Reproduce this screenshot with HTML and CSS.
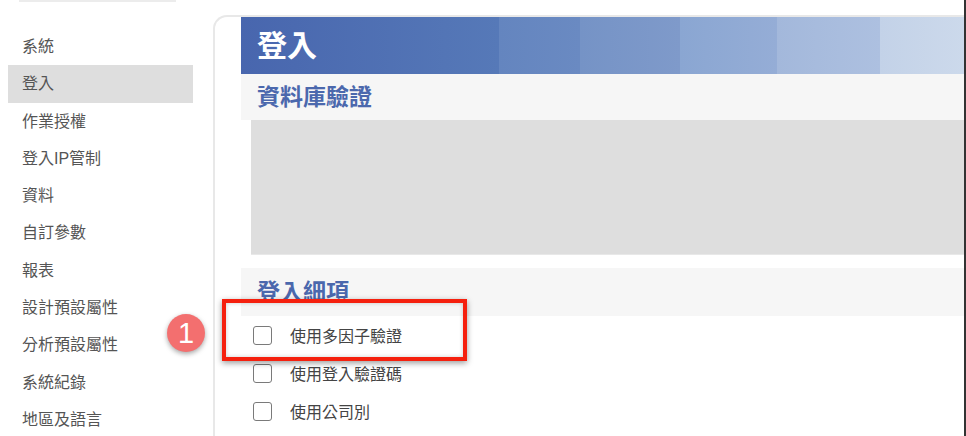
FILE: index.html
```html
<!DOCTYPE html>
<html lang="zh-Hant">
<head>
  <meta charset="UTF-8" />
  <meta name="viewport" content="width=device-width, initial-scale=1.0" />
  <title>登入設定</title>
  <link rel="stylesheet" href="styles.css">
</head>
<body>
  <div class="page">
    <aside class="sidebar">
      <div class="search-edge"></div>
      <ul class="menu">
        <li>系統</li>
        <li class="active">登入</li>
        <li>作業授權</li>
        <li>登入IP管制</li>
        <li>資料</li>
        <li>自訂參數</li>
        <li>報表</li>
        <li>設計預設屬性</li>
        <li>分析預設屬性</li>
        <li>系統紀錄</li>
        <li>地區及語言</li>
      </ul>
    </aside>

    <main class="panel">
      <h1 class="panel-title">登入</h1>

      <h2 class="section-title">資料庫驗證</h2>
      <div class="db-box"></div>

      <h2 class="section-title details">登入細項</h2>
      <div class="options">
        <label class="option highlight">
          <span class="badge">1</span>
          <span class="callout"></span>
          <input type="checkbox" class="check">
          <span>使用多因子驗證</span>
        </label>
        <label class="option">
          <input type="checkbox" class="check">
          <span>使用登入驗證碼</span>
        </label>
        <label class="option">
          <input type="checkbox" class="check">
          <span>使用公司別</span>
        </label>
      </div>
    </main>

    <div class="edge"></div>
  </div>
</body>
</html>
```

FILE: styles.css
```css
* {
  margin: 0;
  padding: 0;
  box-sizing: border-box;
}

body {
  font-family: 'Liberation Sans', 'Noto Sans CJK TC', sans-serif;
  background-color: #ffffff;
  color: #444;
  overflow: hidden;
}

.page {
  display: flex;
  height: 100vh;
}

/* Sidebar */
.sidebar {
  width: 213px;
  flex: none;
}

.search-edge {
  margin-left: 19px;
  width: 157px;
  height: 2px;
  background-color: #ececec;
}

.menu {
  list-style: none;
  margin: 26px 0 0 8px;
  width: 185px;
}

.menu li {
  height: 37.3px;
  line-height: 37.3px;
  padding-left: 14px;
  font-size: 16px;
  color: #555;
}

.menu li.active {
  background-color: #dedede;
}

/* Main panel */
.panel {
  flex: 1;
  margin-top: 15px;
  padding-left: 26px;
  border-top: 2px solid #e8e8e8;
  border-left: 2px solid #e8e8e8;
  border-top-left-radius: 14px;
}

.panel-title {
  height: 57px;
  padding-left: 16px;
  line-height: 57px;
  font-size: 30px;
  font-weight: bold;
  color: #ffffff;
  background: linear-gradient(to right,
    #4866ae 0, #5679b8 258px,
    #6485bf 258px, #6a8ac2 339px,
    #7593c6 339px, #7f9aca 439px,
    #8aa6d2 439px, #95add6 536px,
    #a3b8db 536px, #adc0e0 639px,
    #c3d2e8 639px, #ccd9eb 100%);
}

.section-title {
  height: 46px;
  padding-left: 16px;
  line-height: 46px;
  font-size: 23px;
  font-weight: bold;
  color: #4b68ad;
  background-color: #f6f6f6;
}

.section-title.details {
  height: 48px;
  line-height: 48px;
  margin-top: 13px;
}

.db-box {
  margin-left: 10px;
  height: 135px;
  background-color: #dedede;
  border-bottom: 1px solid #e8e8e8;
}

.options {
  display: flex;
  flex-direction: column;
}

.option {
  position: relative;
  display: flex;
  align-items: center;
  height: 38px;
  padding-left: 12px;
  font-size: 16px;
  color: #444;
}

.check {
  appearance: none;
  width: 19px;
  height: 19px;
  margin-right: 18px;
  border: 1.5px solid #7a7a7a;
  border-radius: 3px;
  background-color: #fff;
}

/* Annotation */
.callout {
  position: absolute;
  left: -19px;
  top: -17px;
  width: 245px;
  height: 62px;
  border: 4px solid #f5200e;
  box-shadow: 0 2px 6px rgba(0, 0, 0, 0.4), inset 0 0 4px rgba(0, 0, 0, 0.2);
  z-index: 2;
}

.badge {
  position: absolute;
  left: -74px;
  top: -2px;
  width: 38px;
  height: 38px;
  border-radius: 50%;
  background-color: #f36f6f;
  color: #fff;
  font-family: 'Liberation Sans', sans-serif;
  font-size: 29px;
  line-height: 38px;
  text-align: center;
  box-shadow: 0 2px 5px rgba(0, 0, 0, 0.35);
  z-index: 2;
}

.edge {
  width: 2px;
  flex: none;
  background-color: #333;
}
```
